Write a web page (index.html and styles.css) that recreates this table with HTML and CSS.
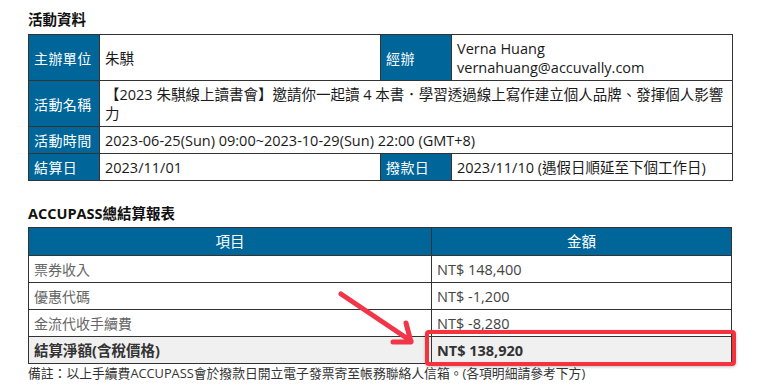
FILE: index.html
```html
<!DOCTYPE html>
<html lang="zh-Hant">
<head>
<meta charset="utf-8">
<link rel="stylesheet" href="styles.css">
</head>
<body>
<div class="page">
  <h2 class="section-title">活動資料</h2>
  <table class="info">
    <colgroup>
      <col class="c-label"><col class="c-value"><col class="c-label"><col class="c-value">
    </colgroup>
    <tr>
      <th>主辦單位</th>
      <td>朱騏</td>
      <th>經辦</th>
      <td>Verna Huang<br>vernahuang@accuvally.com</td>
    </tr>
    <tr>
      <th>活動名稱</th>
      <td colspan="3">【2023 朱騏線上讀書會】邀請你一起讀 4 本書．學習透過線上寫作建立個人品牌、發揮個人影響力</td>
    </tr>
    <tr>
      <th>活動時間</th>
      <td colspan="3">2023-06-25(Sun) 09:00~2023-10-29(Sun) 22:00 (GMT+8)</td>
    </tr>
    <tr>
      <th>結算日</th>
      <td>2023/11/01</td>
      <th>撥款日</th>
      <td>2023/11/10 (遇假日順延至下個工作日)</td>
    </tr>
  </table>

  <h2 class="section-title second">ACCUPASS總結算報表</h2>
  <div class="report-wrap">
    <table class="report">
      <colgroup><col class="r-item"><col class="r-amount"></colgroup>
      <thead>
        <tr><th>項目</th><th>金額</th></tr>
      </thead>
      <tbody>
        <tr><td class="item">票券收入</td><td class="amt">NT$ 148,400</td></tr>
        <tr><td class="item">優惠代碼</td><td class="amt">NT$ -1,200</td></tr>
        <tr><td class="item">金流代收手續費</td><td class="amt">NT$ -8,280</td></tr>
        <tr class="total"><td>結算淨額(含稅價格)</td><td>NT$ 138,920</td></tr>
      </tbody>
    </table>
    <div class="highlight"></div>
    <svg class="arrow" width="100" height="70" viewBox="0 0 100 70">
      <path d="M8 8 L78 55 M73 37 L78 56 L60 56" fill="none" stroke="#f2364a" stroke-width="5" stroke-linecap="round" stroke-linejoin="round"/>
    </svg>
  </div>
  <p class="note">備註：以上手續費ACCUPASS會於撥款日開立電子發票寄至帳務聯絡人信箱。(各項明細請參考下方)</p>
</div>
</body>
</html>
```
FILE: styles.css
```css
html, body {
  margin: 0;
  padding: 0;
  background: #ffffff;
}
body {
  font-family: "Open Sans", "Noto Sans CJK TC", sans-serif;
  font-size: 14.5px;
  color: #222;
}
.page {
  padding: 10px 27px 0 28px;
  width: 704px;
}
.section-title {
  font-size: 14.5px;
  font-weight: bold;
  line-height: 20px;
  margin: 0 0 4px 0;
  color: #111;
}
.section-title.second {
  margin-top: 23px;
  margin-bottom: 3px;
}
table {
  border-collapse: collapse;
  width: 704px;
  table-layout: fixed;
}
.info .c-label { width: 71px; }
.info .c-value { width: 281px; }
.info th, .info td {
  border: 1px solid #333;
  padding: 4px 5px 3px 5px;
  line-height: 19px;
  text-align: left;
  vertical-align: middle;
}
.info th {
  background: #006699;
  color: #fff;
  font-weight: normal;
  font-size: 14px;
  letter-spacing: 0.4px;
  white-space: nowrap;
}
.info td {
  color: #1a1a1a;
}
.report-wrap {
  position: relative;
}
.report .r-item { width: 403px; }
.report .r-amount { width: 300px; }
.report th, .report td {
  border: 1px solid #333;
  padding: 4px 5px 3px 5px;
  line-height: 19px;
}
.report thead th {
  background: #006699;
  color: #fff;
  font-weight: normal;
  text-align: center;
  padding: 4px 5px 4px 5px;
}
.report td.item {
  color: #666;
  font-size: 14px;
}
.report td.amt {
  color: #444;
}
.report .total td {
  background: #f0f0f0;
  font-weight: bold;
  color: #333;
}
.highlight {
  position: absolute;
  left: 397px;
  top: 103px;
  width: 303px;
  height: 28px;
  border: 4px solid #f4333f;
  border-radius: 4px;
  box-shadow: 0 1px 3px rgba(0,0,0,0.25);
}
.arrow {
  position: absolute;
  left: 305px;
  top: 59px;
}
.note {
  margin: 1px 0 0 0;
  font-size: 12.8px;
  line-height: 16px;
  color: #333;
}
```
